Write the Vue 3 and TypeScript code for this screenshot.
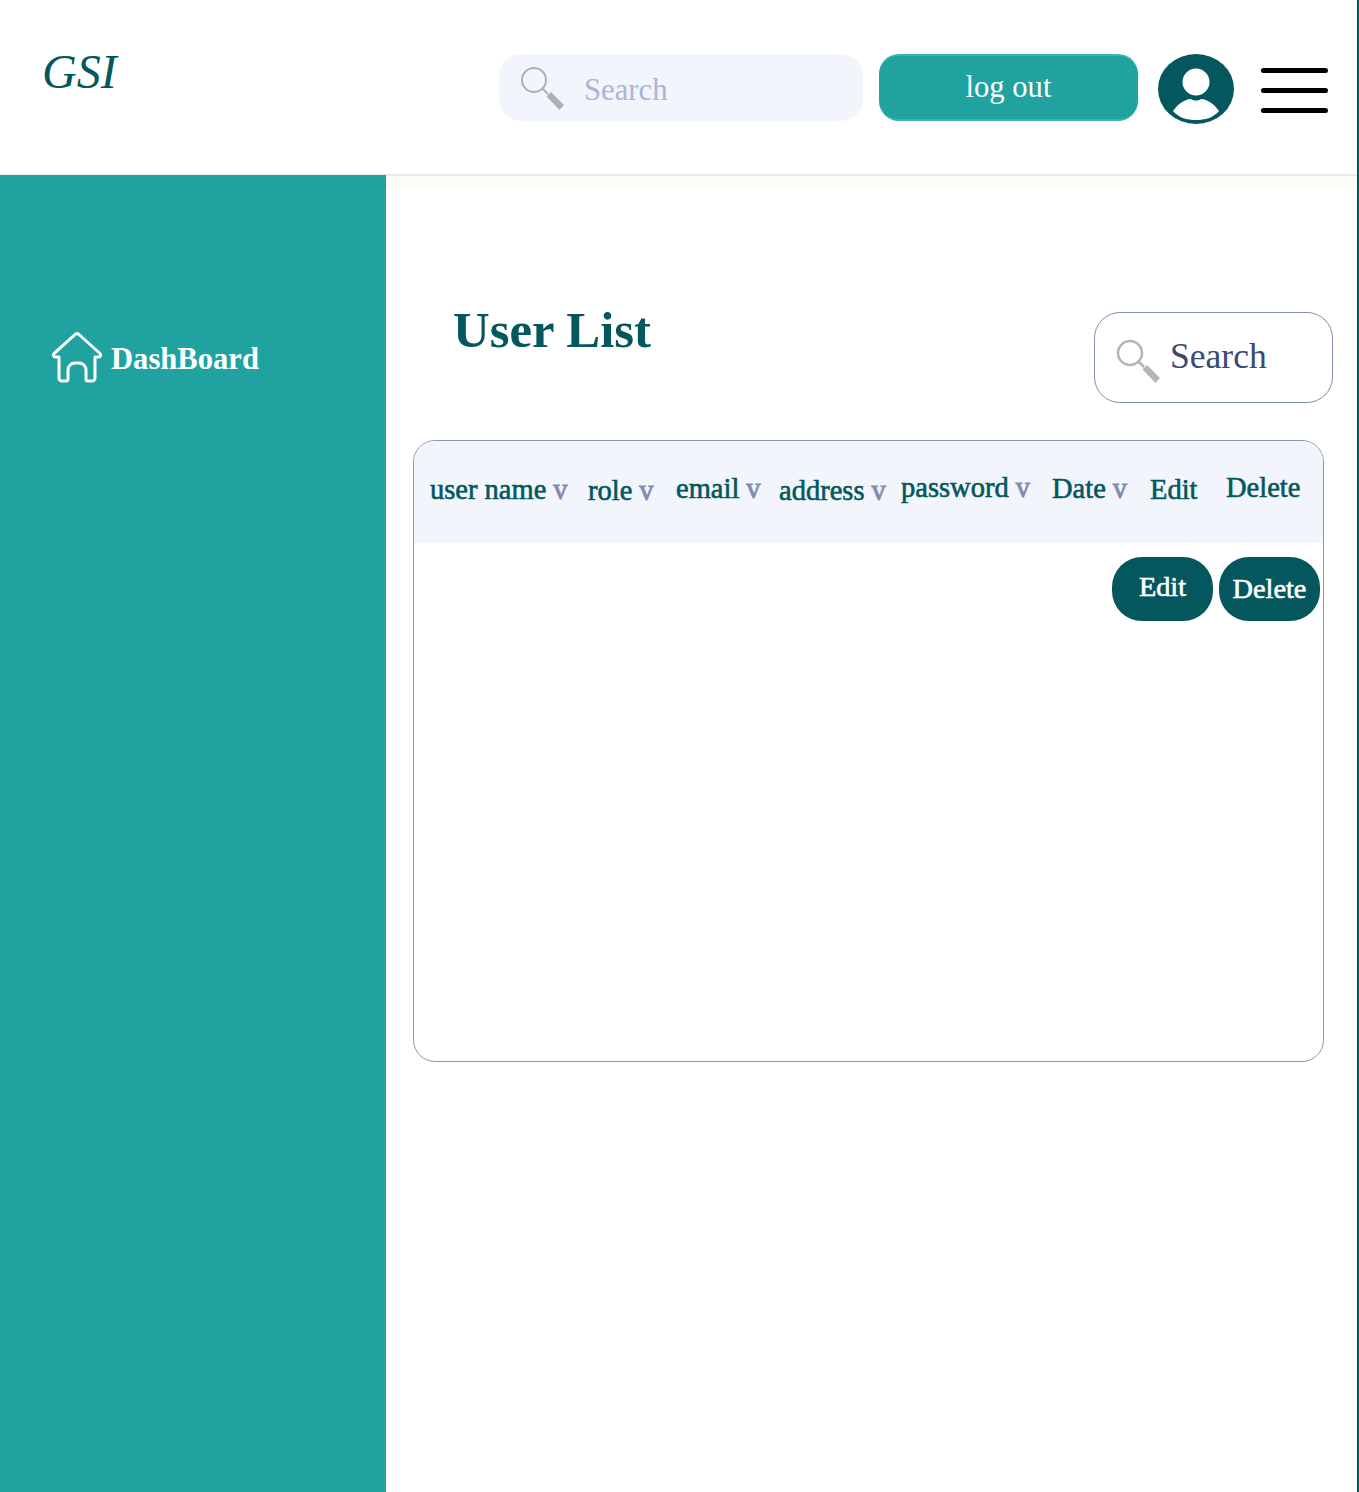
<script setup lang="ts">
interface Column {
  label: string
  sortable: boolean
  width: number
  top: number
}

const columns: Column[] = [
  { label: "user name", sortable: true, width: 158, top: 33 },
  { label: "role", sortable: true, width: 88, top: 34 },
  { label: "email", sortable: true, width: 103, top: 32 },
  { label: "address", sortable: true, width: 122, top: 34 },
  { label: "password", sortable: true, width: 151, top: 31 },
  { label: "Date", sortable: true, width: 98, top: 32 },
  { label: "Edit", sortable: false, width: 76, top: 33 },
  { label: "Delete", sortable: false, width: 90, top: 31 }
]
</script>

<template>
  <div class="page">
    <header class="topbar">
      <div class="logo">GSI</div>
      <div class="top-actions">
        <div class="top-search">
          <svg class="lens" width="46" height="46" viewBox="0 0 46 46">
            <circle cx="14" cy="14" r="12" fill="none" stroke="#aeb0b8" stroke-width="2" />
            <path d="M23 23l5 5" stroke="#aeb0b8" stroke-width="2" />
            <path d="M26.500 30.500l4.500-4.500 13 13-4.500 5z" fill="#aeb0b8" />
          </svg>
          <span>Search</span>
        </div>
        <button class="logout">log out</button>
        <svg class="avatar" width="76" height="70" viewBox="0 0 76 70">
          <ellipse cx="38" cy="35" rx="38" ry="35" fill="#04575c" />
          <circle cx="38" cy="28" r="13.500" fill="#fff" />
          <path d="M15 57c6-9 14-12 18-12 3 2 7 2 10 0 4 0 12 3 18 12-6 7-14 9-23 9s-17-2-23-9z" fill="#fff" />
        </svg>
        <div class="burger">
          <span></span>
          <span></span>
          <span></span>
        </div>
      </div>
    </header>

    <div class="body">
      <aside class="sidebar">
        <div class="nav-item">
          <svg width="52" height="52" viewBox="0 0 52 52">
            <path
              d="M15 49h-4a3 3 0 0 1-3-3V25H4.500a2 2 0 0 1-1.400-3.500L24 2.500a3 3 0 0 1 4 0l21 19a2 2 0 0 1-1.400 3.500H44v21a3 3 0 0 1-3 3h-4a2 2 0 0 1-2-2V38a7 7 0 0 0-7-7h-4a7 7 0 0 0-7 7v9a2 2 0 0 1-2 2z"
              fill="none"
              stroke="#fff"
              stroke-width="3"
              stroke-linejoin="round"
            />
          </svg>
          <span>DashBoard</span>
        </div>
      </aside>

      <main class="content">
        <div class="title-row">
          <h1>User List</h1>
          <div class="list-search">
            <svg width="46" height="46" viewBox="0 0 46 46">
              <circle cx="14" cy="14" r="12" fill="none" stroke="#b5b5b5" stroke-width="2.500" />
              <path d="M23 23l5 5" stroke="#b5b5b5" stroke-width="2.500" />
              <path d="M26.500 30.500l4.500-4.500 13 13-4.500 5z" fill="#b5b5b5" />
            </svg>
            <span>Search</span>
          </div>
        </div>

        <section class="table">
          <div class="table-head">
            <div
              v-for="col in columns"
              :key="col.label"
              class="head-cell"
              :style="{ width: col.width + 'px', paddingTop: col.top + 'px' }"
            >
              {{ col.label }}<span v-if="col.sortable" class="sort">v</span>
            </div>
          </div>
          <div class="table-row">
            <button class="pill pill-edit">Edit</button>
            <button class="pill">Delete</button>
          </div>
        </section>
      </main>
    </div>
  </div>
</template>

<style>
body {
  background: #fff;
}
</style>

<style scoped>
.page {
  width: 1359px;
  height: 1492px;
  box-sizing: border-box;
  border-right: 2px solid #04575c;
  display: flex;
  flex-direction: column;
  overflow: hidden;
  font-family: "Liberation Serif", "Times New Roman", serif;
  background: #fff;
}

.topbar {
  height: 175px;
  flex: none;
  box-sizing: border-box;
  border-bottom: 1px solid #e6ebf0;
  display: flex;
  justify-content: space-between;
  align-items: flex-start;
}

.logo {
  margin: 44px 0 0 42px;
  font-size: 48px;
  line-height: 55px;
  font-style: italic;
  color: #04575c;
}

.top-actions {
  display: flex;
  align-items: flex-start;
  margin: 54px 29px 0 0;
}

.top-search {
  width: 364px;
  height: 67px;
  box-sizing: border-box;
  padding: 12px 0 0 21px;
  border-radius: 22px;
  background: #f2f5fc;
  display: flex;
  align-items: flex-start;
}

.top-search span {
  margin: 6px 0 0 18px;
  font-size: 30.700px;
  line-height: 36px;
  color: #a9b5d6;
}

.logout {
  width: 259px;
  height: 67px;
  margin-left: 16px;
  border: none;
  border-top: 2px solid #3bb3ae;
  border-bottom: 2px solid #3bb3ae;
  border-radius: 20px;
  background: #20a3a0;
  color: #fff;
  font-family: inherit;
  font-size: 30.600px;
  padding: 0;
}

.avatar {
  margin-left: 20px;
}

.burger {
  width: 67px;
  margin: 14px 0 0 27px;
  display: flex;
  flex-direction: column;
  gap: 15px;
}

.burger span {
  height: 5px;
  border-radius: 3px;
  background: #000;
}

.body {
  flex: 1;
  display: flex;
  min-height: 0;
}

.sidebar {
  width: 386px;
  flex: none;
  background: #20a3a0;
  box-sizing: border-box;
  padding: 157px 0 0 51px;
}

.nav-item {
  display: flex;
  align-items: center;
  gap: 8px;
  color: #fff;
  font-size: 30.600px;
  font-weight: 700;
}

.nav-item span {
  margin-top: 2px;
}

.content {
  flex: 1;
  min-width: 0;
  box-sizing: border-box;
  padding: 0 33px 0 27px;
  border-top: 1px solid #e6ebf0;
  background: linear-gradient(#fdfdf8 12px, #fff 12px);
}

.title-row {
  display: flex;
  justify-content: space-between;
  align-items: flex-start;
  padding-top: 124px;
}

.title-row h1 {
  margin: 1px 0 0 40px;
  font-size: 50.800px;
  line-height: 58px;
  font-weight: 700;
  color: #04575c;
}

.list-search {
  width: 239px;
  height: 91px;
  box-sizing: border-box;
  margin: 12px -9px 0 0;
  padding: 26px 0 0 21px;
  border: 1px solid #7f8cb4;
  border-radius: 26px;
  display: flex;
  align-items: flex-start;
  background: #fff;
}

.list-search span {
  margin: -3px 0 0 8px;
  font-size: 35.600px;
  line-height: 41px;
  color: #3b4a72;
}

.table {
  height: 622px;
  margin-top: 37px;
  box-sizing: border-box;
  border: 1px solid #8a95b8;
  border-radius: 22px;
  overflow: hidden;
  background: #fff;
}

.table-head {
  height: 102px;
  box-sizing: border-box;
  padding-left: 16px;
  background: #f2f5fc;
  display: flex;
  align-items: flex-start;
}

.head-cell {
  flex: none;
  font-size: 28.500px;
  line-height: 32px;
  color: #04575c;
  white-space: nowrap;
  -webkit-text-stroke: 0.6px #04575c;
}

.sort {
  margin-left: 7px;
  color: #7f8cb0;
  -webkit-text-stroke: 0.8px #7f8cb0;
}

.table-row {
  display: flex;
  justify-content: flex-end;
  gap: 6px;
  padding: 14px 3px 0 0;
}

.pill {
  width: 101px;
  height: 64px;
  border: none;
  border-radius: 30px;
  background: #04575c;
  color: #fff;
  font-family: inherit;
  font-size: 28.300px;
  padding: 0;
  -webkit-text-stroke: 0.6px #fff;
}

.pill-edit {
  padding-bottom: 5px;
}
</style>
